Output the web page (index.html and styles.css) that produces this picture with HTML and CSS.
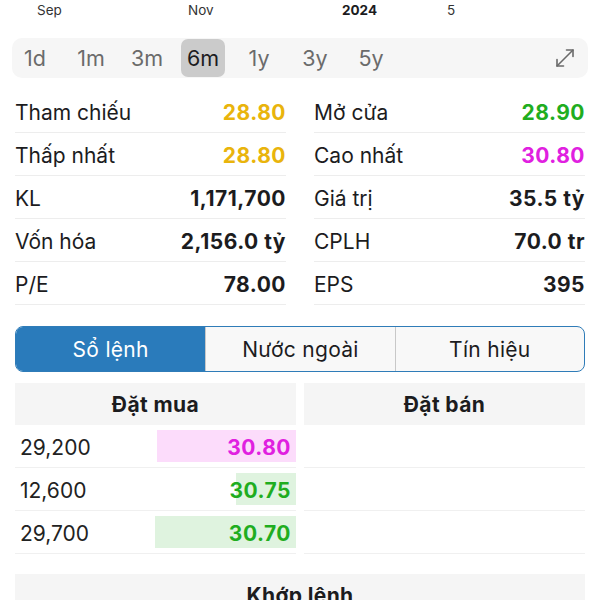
FILE: index.html
```html
<!DOCTYPE html>
<html lang="vi">
<head>
    <meta charset="UTF-8">
    <meta name="viewport" content="width=device-width, initial-scale=1.0">
    <title>Chi tiết cổ phiếu</title>
    <link rel="stylesheet" href="styles.css">
</head>
<body>

    <div class="page">

        <!-- chart time axis -->
        <div class="axis">
            <span class="tick" style="left: 22px;">Sep</span>
            <span class="tick" style="left: 173px;">Nov</span>
            <span class="tick tick-year" style="left: 327px;">2024</span>
            <span class="tick" style="left: 432px;">5</span>
        </div>

        <!-- range selector -->
        <div class="ranges">
            <span class="range">1d</span>
            <span class="range">1m</span>
            <span class="range">3m</span>
            <span class="range active">6m</span>
            <span class="range">1y</span>
            <span class="range">3y</span>
            <span class="range">5y</span>
            <span class="expand">
                <svg width="22" height="22" viewBox="0 0 22 22" fill="none" stroke="#6a6a6a" stroke-width="1.6" stroke-linecap="round" stroke-linejoin="round">
                    <path d="M3 19 L19 3"/>
                    <path d="M12.5 3 H19 V9.5"/>
                    <path d="M3 12.5 V19 H9.5"/>
                </svg>
            </span>
        </div>

        <!-- price stats -->
        <div class="stats">
            <div class="stats-col">
                <div class="stat"><span>Tham chiếu</span><b class="ref">28.80</b></div>
                <div class="stat"><span>Thấp nhất</span><b class="ref">28.80</b></div>
                <div class="stat"><span>KL</span><b>1,171,700</b></div>
                <div class="stat"><span>Vốn hóa</span><b>2,156.0 tỷ</b></div>
                <div class="stat"><span>P/E</span><b>78.00</b></div>
            </div>
            <div class="stats-col">
                <div class="stat"><span>Mở cửa</span><b class="up">28.90</b></div>
                <div class="stat"><span>Cao nhất</span><b class="ceil">30.80</b></div>
                <div class="stat"><span>Giá trị</span><b>35.5 tỷ</b></div>
                <div class="stat"><span>CPLH</span><b>70.0 tr</b></div>
                <div class="stat"><span>EPS</span><b>395</b></div>
            </div>
        </div>

        <!-- tabs -->
        <div class="tabs">
            <div class="tab active">Sổ lệnh</div>
            <div class="tab">Nước ngoài</div>
            <div class="tab">Tín hiệu</div>
        </div>

        <!-- order book -->
        <div class="book">
            <div class="book-side">
                <div class="book-head">Đặt mua</div>
                <div class="order">
                    <span class="qty">29,200</span>
                    <span class="price ceil-bg" style="width: 49.3%;">30.80</span>
                </div>
                <div class="order">
                    <span class="qty">12,600</span>
                    <span class="price up-bg" style="width: 21.2%;">30.75</span>
                </div>
                <div class="order">
                    <span class="qty">29,700</span>
                    <span class="price up-bg" style="width: 50.2%;">30.70</span>
                </div>
            </div>
            <div class="book-side">
                <div class="book-head">Đặt bán</div>
                <div class="order"></div>
                <div class="order"></div>
                <div class="order"></div>
            </div>
        </div>

        <div class="matched-head">Khớp lệnh</div>

    </div>

</body>
</html>
```

FILE: styles.css
```css
/* Basic reset */
* {
    margin: 0;
    padding: 0;
    box-sizing: border-box;
}

body {
    font-family: Inter, "Noto Sans", "DejaVu Sans", sans-serif;
    background-color: #ffffff;
    color: #1c1c1e;
}

.page {
    padding: 0 15px;
}

/* Chart axis */
.axis {
    position: relative;
    height: 20px;
    margin-bottom: 18px;
    font-size: 13.5px;
    line-height: 20px;
    color: #333;
}

.tick {
    position: absolute;
    top: 0;
}

.tick-year {
    font-weight: 700;
    color: #1c1c1e;
}

/* Range selector */
.ranges {
    display: flex;
    gap: 12px;
    height: 40px;
    margin: 0 -3px;
    padding: 1px;
    background-color: #f6f6f6;
    border-radius: 10px;
}

.range {
    width: 44px;
    display: flex;
    align-items: center;
    justify-content: center;
    font-size: 21.5px;
    color: #6b6b6b;
    border-radius: 7px;
}

.range.active {
    background-color: #cbcbcb;
    color: #1c1c1e;
}

.expand {
    margin-left: auto;
    width: 40px;
    display: flex;
    align-items: center;
    justify-content: center;
    margin-right: 2px;
}

/* Stats grid */
.stats {
    display: grid;
    grid-template-columns: 1fr 1fr;
    column-gap: 28px;
    margin-top: 12px;
}

.stat {
    display: flex;
    justify-content: space-between;
    align-items: center;
    height: 43px;
    padding-top: 2px;
    border-bottom: 1px solid #ededed;
    font-size: 21px;
}

.stat b {
    font-weight: 700;
    letter-spacing: 0.5px;
}

.ref { color: #e9b40c; }
.up { color: #1fad1f; }
.ceil { color: #e020e0; }

/* Tabs */
.tabs {
    display: grid;
    grid-template-columns: 1fr 1fr 1fr;
    height: 46px;
    margin-top: 21px;
    border: 1.5px solid #2f7cb8;
    border-radius: 8px;
    overflow: hidden;
    background-color: #f8f8f8;
}

.tab {
    display: flex;
    align-items: center;
    justify-content: center;
    font-size: 21px;
    letter-spacing: 0.3px;
    color: #1c1c1e;
}

.tab + .tab {
    border-left: 1px solid #c8c8c8;
}

.tab.active {
    background-color: #2a7bbb;
    color: #ffffff;
}

/* Order book */
.book {
    display: grid;
    grid-template-columns: 1fr 1fr;
    column-gap: 8px;
    margin-top: 11px;
}

.book-head {
    height: 42px;
    display: flex;
    align-items: center;
    justify-content: center;
    background-color: #f5f5f5;
    font-size: 21px;
    font-weight: 700;
    letter-spacing: 0.4px;
}

.order {
    display: flex;
    justify-content: space-between;
    align-items: center;
    height: 43px;
    padding: 5px 0;
    border-bottom: 1px solid #f0f0f0;
    font-size: 21px;
}

.qty {
    padding-left: 5px;
    padding-top: 2px;
    color: #222;
}

.price {
    height: 32px;
    display: flex;
    align-items: center;
    justify-content: flex-end;
    padding-right: 5px;
    padding-top: 2px;
    font-weight: 700;
    letter-spacing: 0.5px;
}

.ceil-bg {
    background-color: #fcdcfb;
    color: #e020e0;
}

.up-bg {
    background-color: #dff3df;
    color: #1fad1f;
}

.matched-head {
    height: 42px;
    margin-top: 20px;
    display: flex;
    align-items: center;
    justify-content: center;
    background-color: #f5f5f5;
    font-size: 21px;
    font-weight: 700;
    letter-spacing: 0.4px;
}
```
